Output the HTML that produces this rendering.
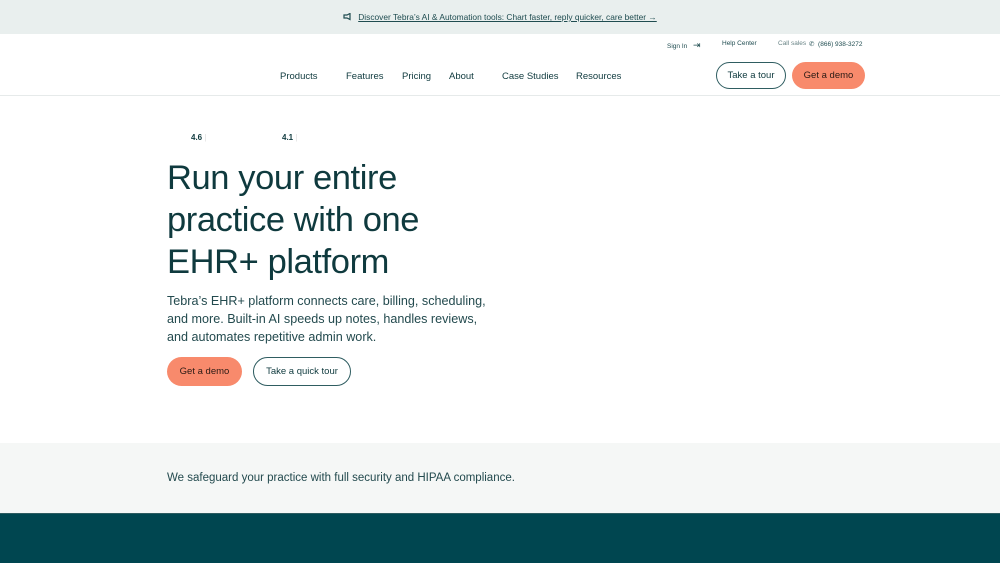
<!DOCTYPE html>
<html><head><meta charset="utf-8"><style>
*{margin:0;padding:0;box-sizing:border-box}
body{width:1000px;height:563px;overflow:hidden;background:#fff;font-family:"Liberation Sans",sans-serif;color:#0f3a3e;position:relative}
.top{position:absolute;left:0;top:0;width:1000px;height:34px;background:#e9efee;font-size:8.4px;color:#1f4c50;display:flex;align-items:center;justify-content:center}
.top a{text-decoration:underline;color:#1f4c50;margin-left:6px}
.util{position:absolute;top:40px;font-size:6.5px;color:#1f4c50}
.nav{position:absolute;top:71px;font-size:9.5px;color:#0f3a3e}
.btn{position:absolute;border-radius:14px;font-size:9.5px;display:flex;align-items:center;justify-content:center}
.hdrline{position:absolute;top:95px;left:0;width:1000px;height:1px;background:#e6eaea}
h1{position:absolute;left:167px;top:157px;font-weight:400;font-size:34.5px;line-height:42px;letter-spacing:-0.4px;color:#0f3a3e}
p.lead{position:absolute;left:167px;top:292px;font-size:12.6px;line-height:18px;color:#234a4e;width:325px}
.band{position:absolute;left:0;top:443px;width:1000px;height:70px;background:#f5f7f6}
.band span{position:absolute;left:167px;top:29px;font-size:11.5px;color:#234a4e}
.teal{position:absolute;left:0;top:513px;width:1000px;height:50px;background:#004650;border-top:1px solid #2c5b60}
</style></head><body>
<div class="top"><svg width="9" height="8" viewBox="0 0 9 8"><path d="M1 2h3l3-1.5v6L4 5H1z" fill="none" stroke="#1f4c50" stroke-width="1.2"/></svg><a>Discover Tebra’s AI &amp; Automation tools: Chart faster, reply quicker, care better →</a></div>
<div class="util" style="left:667px">Sign In <span style="font-size:9px;margin-left:4px">⇥</span></div>
<div class="util" style="left:722px">Help Center</div>
<div class="util" style="left:778px;color:#6a8587">Call sales</div>
<div class="util" style="left:809px">✆&nbsp; (866) 938-3272</div>
<div class="nav" style="left:280px">Products</div>
<div class="nav" style="left:346px">Features</div>
<div class="nav" style="left:402px">Pricing</div>
<div class="nav" style="left:449px">About</div>
<div class="nav" style="left:502px">Case Studies</div>
<div class="nav" style="left:576px">Resources</div>
<div class="btn" style="left:716px;top:62px;width:70px;height:27px;border:1px solid #2f5d61">Take a tour</div>
<div class="btn" style="left:792px;top:62px;width:73px;height:27px;background:#f88a6c;color:#2a1a14">Get a demo</div>
<div class="hdrline"></div>
<div style="position:absolute;left:191px;top:133px;font-size:8px;font-weight:700">4.6 <span style="color:#ddd;font-weight:400">|</span></div>
<div style="position:absolute;left:282px;top:133px;font-size:8px;font-weight:700">4.1 <span style="color:#ddd;font-weight:400">|</span></div>
<h1>Run your entire<br>practice with one<br>EHR+ platform</h1>
<p class="lead">Tebra’s EHR+ platform connects care, billing, scheduling, and more. Built-in AI speeds up notes, handles reviews, and automates repetitive admin work.</p>
<div class="btn" style="left:167px;top:357px;width:75px;height:29px;background:#f88a6c;color:#2a1a14;border-radius:15px">Get a demo</div>
<div class="btn" style="left:253px;top:357px;width:98px;height:29px;border:1px solid #2f5d61;border-radius:15px">Take a quick tour</div>
<div class="band"><span>We safeguard your practice with full security and HIPAA compliance.</span></div>
<div class="teal"></div>
</body></html>
